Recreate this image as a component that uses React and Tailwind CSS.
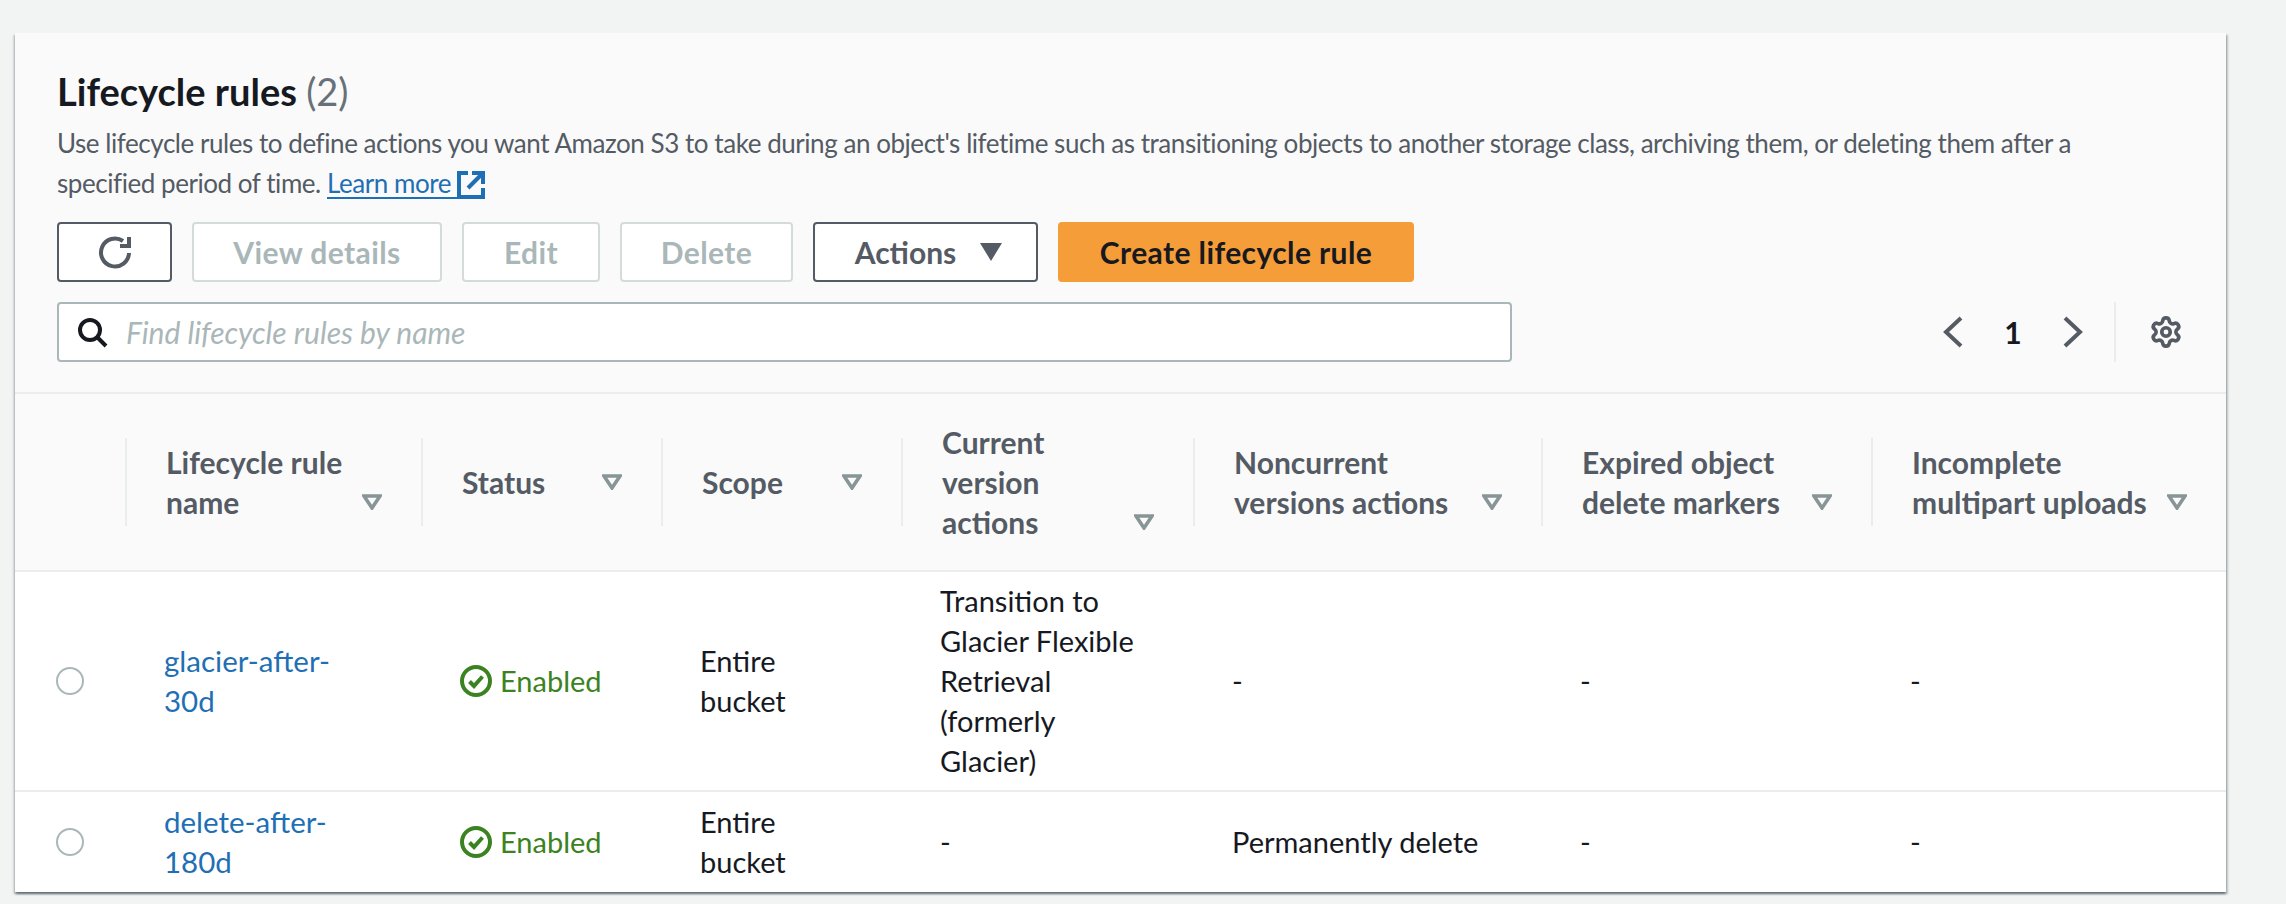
import { Settings } from "lucide-react";

const font = { fontFamily: "Lato, sans-serif" };

function SortIcon() {
  return (
    <svg width="20" height="16" viewBox="0 0 20 16" className="shrink-0 mb-[12px]">
      <path d="M2 2 H18 L10 14 Z" fill="none" stroke="#879596" strokeWidth="3.5" strokeLinejoin="miter" />
    </svg>
  );
}

function HeaderCell({ lines }) {
  return (
    <th className="p-0 align-middle font-bold text-left text-[30px]">
      <div className="h-[88px] flex items-center border-l-2 border-[#eaeded] pl-[39px] pr-[39px]">
        <div className="flex items-end justify-between w-full">
          <div className="whitespace-nowrap">
            {lines.map((l) => (
              <div key={l}>{l}</div>
            ))}
          </div>
          <SortIcon />
        </div>
      </div>
    </th>
  );
}

function Radio() {
  return <div className="w-[28px] h-[28px] ml-[41px] rounded-full border-2 border-[#aab7b8] bg-white" />;
}

function Status() {
  return (
    <div className="flex items-center gap-[8px] text-[#3b8321]">
      <svg width="32" height="32" viewBox="0 0 32 32" fill="none" stroke="#3b8321" strokeWidth="4">
        <circle cx="16" cy="16" r="14" />
        <path d="M9.5 16.5 L14 21 L22.5 11.5" />
      </svg>
      <span>Enabled</span>
    </div>
  );
}

function Cell({ children }) {
  return <td className="p-0 pl-[39px] align-middle">{children}</td>;
}

function DisabledButton({ width, children }) {
  return (
    <button className={`h-[60px] ${width} rounded-[4px] border-2 border-[#d5dbdb] bg-white text-[#aab7b8] font-bold text-[30px] tracking-[0.4px]`}>
      {children}
    </button>
  );
}

export default function App() {
  return (
    <div className="min-h-screen bg-[#f2f3f3] pt-[33px] pl-[15px] pr-[60px] text-[29px] leading-[40px] text-[#16191f]" style={font}>
      <div className="bg-[#fafafa] shadow-[0_2px_2px_0_rgba(0,28,36,0.45),2px_2px_2px_0_rgba(0,28,36,0.2),-2px_2px_2px_0_rgba(0,28,36,0.1)]">
        {/* Header */}
        <div className="px-[42px] pt-[36px] pb-[30px] border-b-2 border-[#eaeded]">
          <h1 className="text-[38px] leading-[44px] font-bold">
            Lifecycle rules <span className="font-normal text-[#687078]">(2)</span>
          </h1>
          <p className="mt-[10px] text-[#545b64] text-[26px] tracking-[-0.45px]">
            Use lifecycle rules to define actions you want Amazon S3 to take during an object's lifetime such as transitioning objects to another storage class, archiving them, or deleting them after a
            <br />
            specified period of time.{" "}
            <a className="text-[#1f6fb5] underline decoration-2 underline-offset-[4px]">Learn more&nbsp;</a>
            <svg width="28" height="28" viewBox="0 0 28 28" fill="none" stroke="#1f6fb5" strokeWidth="4" className="inline align-[-6px]">
              <path d="M11 2 H2 V26 H26 V17" />
              <path d="M15 2 H26 V13" />
              <path d="M26 2 L11 17" />
            </svg>
          </p>

          <div className="mt-[19px] flex gap-[20px]">
            <button className="h-[60px] w-[115px] rounded-[4px] border-2 border-[#545b64] bg-white flex items-center justify-center">
              <svg width="34" height="34" viewBox="0 0 34 34" fill="none" stroke="#545b64" strokeWidth="4">
                <path d="M31 18 A 14 14 0 1 1 25 6" />
                <path d="M31 2 V11 H22" />
              </svg>
            </button>
            <DisabledButton width="w-[250px]">View details</DisabledButton>
            <DisabledButton width="w-[138px]">Edit</DisabledButton>
            <DisabledButton width="w-[173px]">Delete</DisabledButton>
            <button className="h-[60px] w-[225px] rounded-[4px] border-2 border-[#545b64] bg-white text-[#545b64] font-bold text-[30px] flex items-center justify-center gap-[24px] pl-[6px]">
              Actions
              <svg width="22" height="18" viewBox="0 0 22 18">
                <path d="M0 0 H22 L11 18 Z" fill="#545b64" />
              </svg>
            </button>
            <button className="h-[60px] w-[356px] rounded-[4px] bg-[#f59d38] text-[#16191f] font-bold text-[30px] tracking-[0.4px]">
              Create lifecycle rule
            </button>
          </div>

          <div className="mt-[20px] flex items-center justify-between">
            <div className="h-[60px] w-[1455px] rounded-[4px] border-2 border-[#aab7b8] bg-white flex items-center pl-[17px] gap-[18px]">
              <svg width="32" height="32" viewBox="0 0 32 32" fill="none" stroke="#16191f" strokeWidth="4">
                <circle cx="14" cy="14" r="10" />
                <path d="M21 21 L30 30" />
              </svg>
              <span className="italic text-[#aab7b8] text-[30px]">Find lifecycle rules by name</span>
            </div>
            <div className="flex items-center text-[#545b64]">
              <svg width="20" height="32" viewBox="0 0 20 32" fill="none" stroke="#545b64" strokeWidth="4">
                <path d="M18 2 L3 16 L18 30" />
              </svg>
              <span className="w-[100px] text-center font-bold text-[#16191f] text-[30px]">1</span>
              <svg width="20" height="32" viewBox="0 0 20 32" fill="none" stroke="#545b64" strokeWidth="4">
                <path d="M2 2 L17 16 L2 30" />
              </svg>
              <div className="ml-[31px] h-[60px] w-[2px] bg-[#eaeded]" />
              <Settings size={34} strokeWidth={2.6} color="#545b64" className="ml-[33px] mr-[1px]" />
            </div>
          </div>
        </div>

        {/* Table */}
        <table className="w-full table-fixed border-collapse">
          <colgroup>
            <col className="w-[110px]" />
            <col className="w-[296px]" />
            <col className="w-[240px]" />
            <col className="w-[240px]" />
            <col className="w-[292px]" />
            <col className="w-[348px]" />
            <col className="w-[330px]" />
            <col className="w-[355px]" />
          </colgroup>
          <thead className="text-[#545b64]">
            <tr className="h-[177px] border-b-2 border-[#eaeded]">
              <th className="p-0" />
              <HeaderCell lines={["Lifecycle rule", "name"]} />
              <HeaderCell lines={["Status"]} />
              <HeaderCell lines={["Scope"]} />
              <HeaderCell lines={["Current", "version", "actions"]} />
              <HeaderCell lines={["Noncurrent", "versions actions"]} />
              <HeaderCell lines={["Expired object", "delete markers"]} />
              <HeaderCell lines={["Incomplete", "multipart uploads"]} />
            </tr>
          </thead>
          <tbody className="bg-white">
            <tr className="h-[220px] border-b-2 border-[#eaeded]">
              <td className="p-0"><Radio /></td>
              <Cell><a className="text-[#1f6fb5] text-[29.5px]">glacier-after-<br />30d</a></Cell>
              <Cell><Status /></Cell>
              <Cell>Entire<br />bucket</Cell>
              <Cell>Transition to<br />Glacier Flexible<br />Retrieval<br />(formerly<br />Glacier)</Cell>
              <Cell>-</Cell>
              <Cell>-</Cell>
              <Cell>-</Cell>
            </tr>
            <tr className="h-[101px]">
              <td className="p-0"><Radio /></td>
              <Cell><a className="text-[#1f6fb5] text-[29.5px]">delete-after-<br />180d</a></Cell>
              <Cell><Status /></Cell>
              <Cell>Entire<br />bucket</Cell>
              <Cell>-</Cell>
              <Cell>Permanently delete</Cell>
              <Cell>-</Cell>
              <Cell>-</Cell>
            </tr>
          </tbody>
        </table>
      </div>
    </div>
  );
}
